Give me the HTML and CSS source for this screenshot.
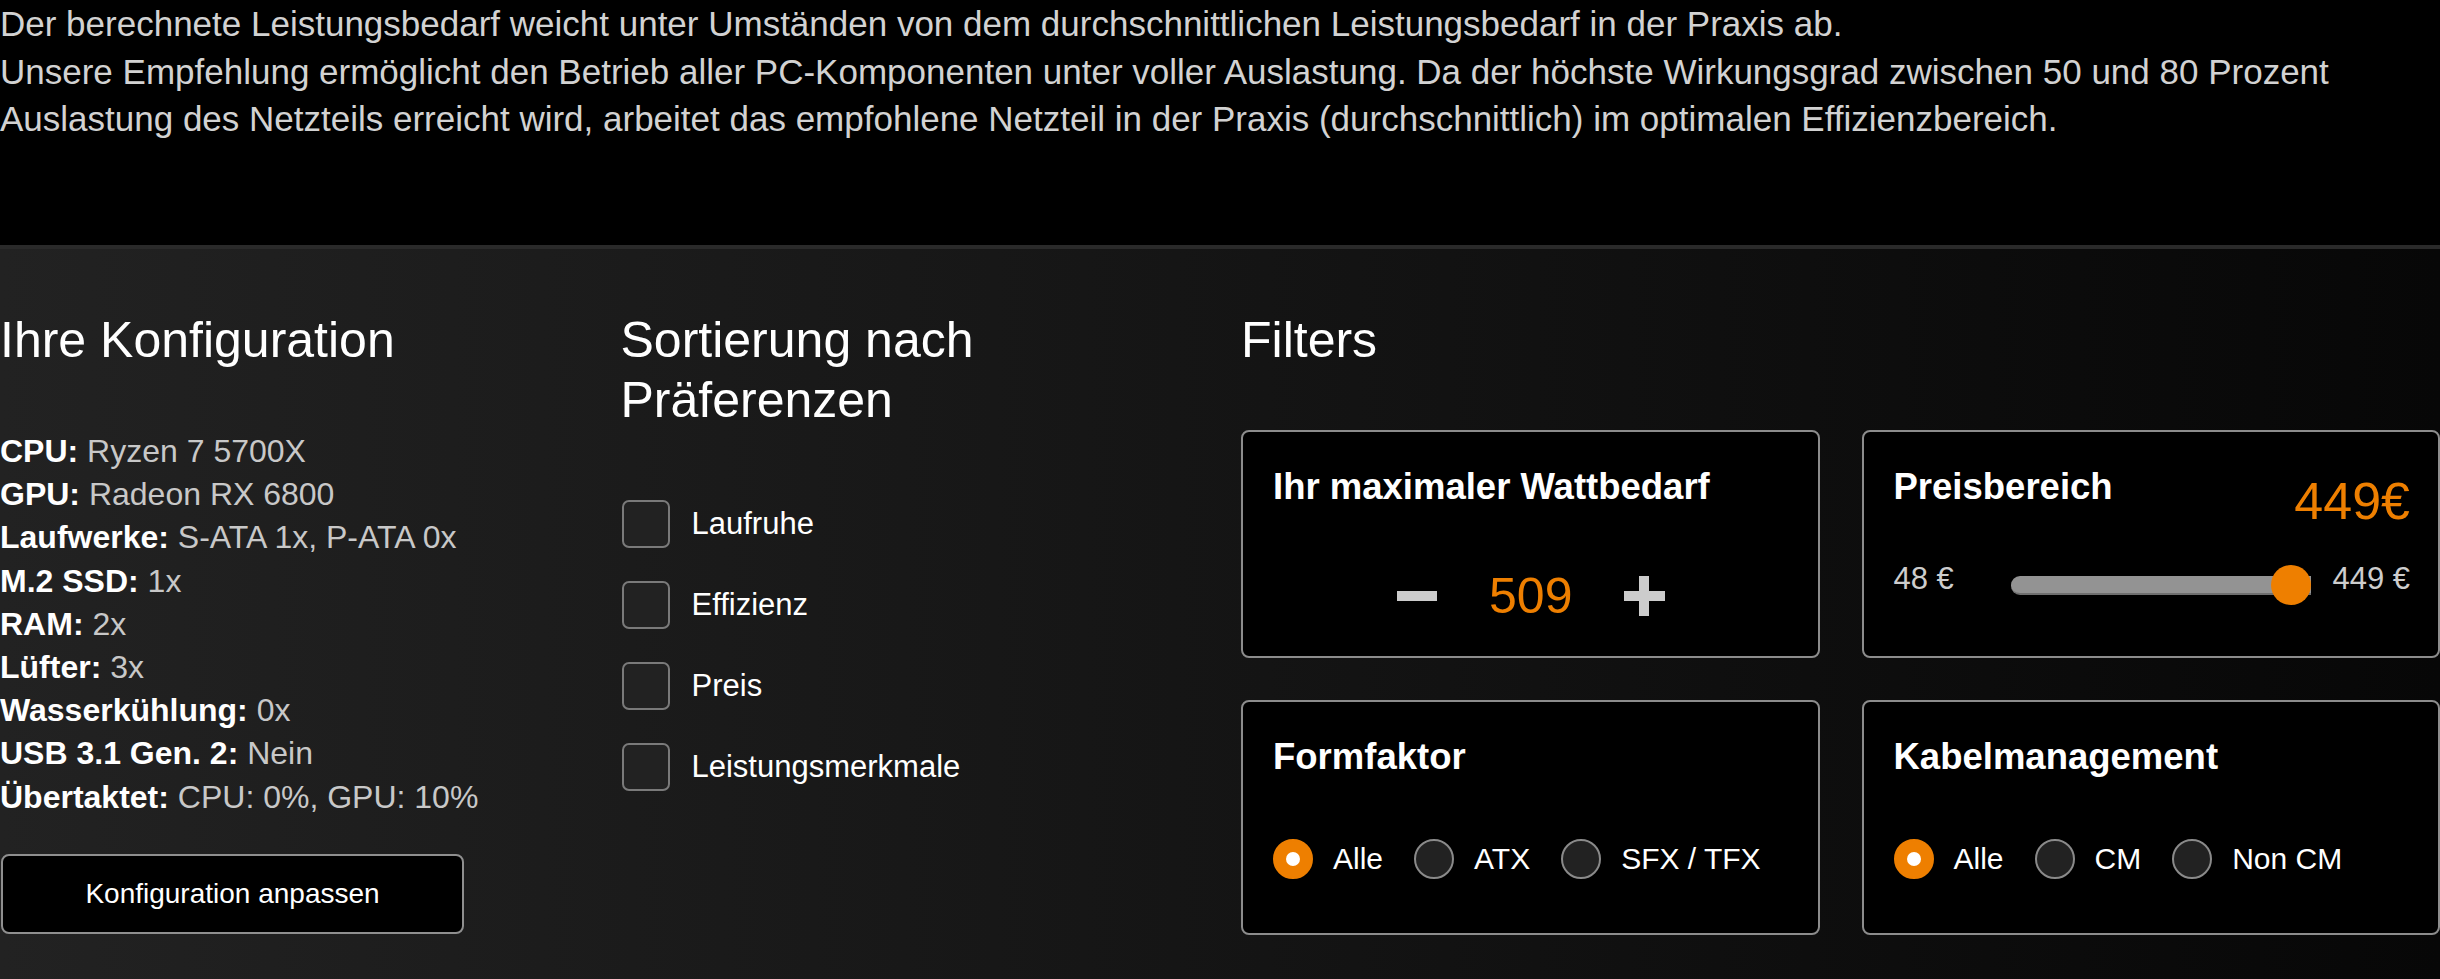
FILE: index.html
```html
<!DOCTYPE html>
<html lang="de">
<head>
<meta charset="utf-8">
<title>Netzteil-Empfehlung</title>
<link rel="stylesheet" href="styles.css">
</head>
<body>
<section class="intro">
  <p>Der berechnete Leistungsbedarf weicht unter Umständen von dem durchschnittlichen Leistungsbedarf in der Praxis ab.</p>
  <p>Unsere Empfehlung ermöglicht den Betrieb aller PC-Komponenten unter voller Auslastung. Da der höchste Wirkungsgrad zwischen 50 und 80 Prozent<br>Auslastung des Netzteils erreicht wird, arbeitet das empfohlene Netzteil in der Praxis (durchschnittlich) im optimalen Effizienzbereich.</p>
</section>

<section class="panel">
  <div class="col config">
    <h2>Ihre Konfiguration</h2>
    <ul class="specs">
      <li><b>CPU:</b> Ryzen 7 5700X</li>
      <li><b>GPU:</b> Radeon RX 6800</li>
      <li><b>Laufwerke:</b> S-ATA 1x, P-ATA 0x</li>
      <li><b>M.2 SSD:</b> 1x</li>
      <li><b>RAM:</b> 2x</li>
      <li><b>Lüfter:</b> 3x</li>
      <li><b>Wasserkühlung:</b> 0x</li>
      <li><b>USB 3.1 Gen. 2:</b> Nein</li>
      <li><b>Übertaktet:</b> CPU: 0%, GPU: 10%</li>
    </ul>
    <button class="btn" type="button">Konfiguration anpassen</button>
  </div>

  <div class="col sort">
    <h2>Sortierung nach Präferenzen</h2>
    <ul class="checks">
      <li><span class="box"></span><span>Laufruhe</span></li>
      <li><span class="box"></span><span>Effizienz</span></li>
      <li><span class="box"></span><span>Preis</span></li>
      <li><span class="box"></span><span>Leistungsmerkmale</span></li>
    </ul>
  </div>

  <div class="col filters">
    <h2>Filters</h2>
    <div class="cards">
      <div class="card">
        <h3>Ihr maximaler Wattbedarf</h3>
        <div class="stepper">
          <span class="minus"></span>
          <span class="value">509</span>
          <span class="plus"></span>
        </div>
      </div>

      <div class="card">
        <div class="card-head">
          <h3>Preisbereich</h3>
          <span class="price">449€</span>
        </div>
        <div class="range">
          <span class="range-label">48 €</span>
          <div class="slider">
            <div class="track"></div>
            <span class="thumb"></span>
          </div>
          <span class="range-label">449 €</span>
        </div>
      </div>

      <div class="card">
        <h3>Formfaktor</h3>
        <div class="radios">
          <label class="opt"><span class="radio on"></span>Alle</label>
          <label class="opt"><span class="radio"></span>ATX</label>
          <label class="opt"><span class="radio"></span>SFX / TFX</label>
        </div>
      </div>

      <div class="card">
        <h3>Kabelmanagement</h3>
        <div class="radios">
          <label class="opt"><span class="radio on"></span>Alle</label>
          <label class="opt"><span class="radio"></span>CM</label>
          <label class="opt"><span class="radio"></span>Non CM</label>
        </div>
      </div>
    </div>
  </div>
</section>
</body>
</html>
```

FILE: styles.css
```css
* {
  box-sizing: border-box;
}

html,
body {
  margin: 0;
  padding: 0;
  background: #000;
}

body {
  font-family: "Liberation Sans", Arial, Helvetica, sans-serif;
  color: #fff;
}

.intro {
  height: 245px;
  background: #000;
}

.intro p {
  margin: 0;
  font-size: 35px;
  line-height: 47.5px;
  color: #d2d2d2;
}

.panel {
  min-height: calc(100vh - 245px);
  border-top: 4px solid #2a2a2a;
  background: linear-gradient(to right, #222222, #070707);
  display: grid;
  grid-template-columns: repeat(4, 1fr);
  column-gap: 42px;
  align-items: start;
  padding-top: 61px;
}

h2 {
  margin: 0 0 60px;
  font-size: 50px;
  line-height: 60px;
  font-weight: 400;
  color: #fff;
}

.filters {
  grid-column: span 2;
}

/* Konfiguration */
.specs {
  list-style: none;
  margin: 0;
  padding: 0;
  font-size: 32px;
  line-height: 43.2px;
  color: #c8c8c8;
}

.specs b {
  color: #fff;
  font-weight: 700;
}

.btn {
  display: block;
  margin: 35px 0 0 1px;
  width: 463px;
  height: 80px;
  background: #000;
  border: 2px solid #8f8f8f;
  border-radius: 8px;
  color: #fff;
  font-family: inherit;
  font-size: 28px;
}

/* Sortierung */
.checks {
  list-style: none;
  margin: 70px 0 0;
  padding: 0 0 0 1px;
  display: flex;
  flex-direction: column;
  gap: 33px;
}

.checks li {
  display: flex;
  align-items: center;
  gap: 22px;
  font-size: 31px;
  height: 48px;
  color: #fff;
}

.box {
  width: 48px;
  height: 48px;
  border: 2px solid #7a7a7a;
  border-radius: 7px;
  background: #222;
}

/* Filter-Karten */
.cards {
  display: grid;
  grid-template-columns: 1fr 1fr;
  gap: 42px;
}

.card {
  background: #000;
  border: 2px solid #8c8c8c;
  border-radius: 8px;
  padding: 34px 28px 31px 30px;
}

.card h3 {
  margin: 0;
  font-size: 36.5px;
  line-height: 41.5px;
  font-weight: 700;
}

.stepper {
  margin-top: 60px;
  height: 57px;
  display: flex;
  align-items: center;
  justify-content: center;
  gap: 52px;
}

.minus {
  width: 40px;
  height: 10px;
  background: #cccccc;
}

.plus {
  position: relative;
  width: 41px;
  height: 40px;
}

.plus::before,
.plus::after {
  content: "";
  position: absolute;
  background: #cccccc;
}

.plus::before {
  left: 0;
  right: 0;
  top: 15px;
  height: 10px;
}

.plus::after {
  top: 0;
  bottom: 0;
  left: 15px;
  width: 10px;
}

.value {
  font-size: 50px;
  line-height: 57px;
  color: #ee7f00;
}

.card-head {
  display: flex;
  justify-content: space-between;
  align-items: flex-start;
}

.price {
  margin-top: 6px;
  font-size: 52px;
  line-height: 59px;
  color: #ee7f00;
}

.range {
  margin-top: 30px;
  display: flex;
  align-items: flex-start;
  height: 48px;
}

.range-label {
  font-size: 31px;
  line-height: 35px;
  color: #cdcdcd;
}

.slider {
  position: relative;
  flex: 1;
  height: 48px;
  margin: 0 21px 0 57px;
}

.track {
  margin-top: 15px;
  height: 19px;
  border-radius: 9px 0 0 9px;
  background: #939393;
  border-bottom: 2px solid #6f6f6f;
}

.thumb {
  position: absolute;
  right: 0;
  top: 4px;
  width: 40px;
  height: 40px;
  border-radius: 50%;
  background: #ee7f00;
}

.radios {
  margin: 62px 0 23px;
  display: flex;
  align-items: center;
  gap: 31px;
}

.opt {
  display: flex;
  align-items: center;
  gap: 20px;
  font-size: 30px;
  line-height: 40px;
  color: #fff;
}

.radio {
  width: 40px;
  height: 40px;
  border-radius: 50%;
  border: 2px solid #8a8a8a;
  background: #222;
  display: flex;
  align-items: center;
  justify-content: center;
}

.radio.on {
  border-color: #ee7f00;
  background: #ee7f00;
}

.radio.on::after {
  content: "";
  width: 14px;
  height: 14px;
  border-radius: 50%;
  background: #fff;
}
```
